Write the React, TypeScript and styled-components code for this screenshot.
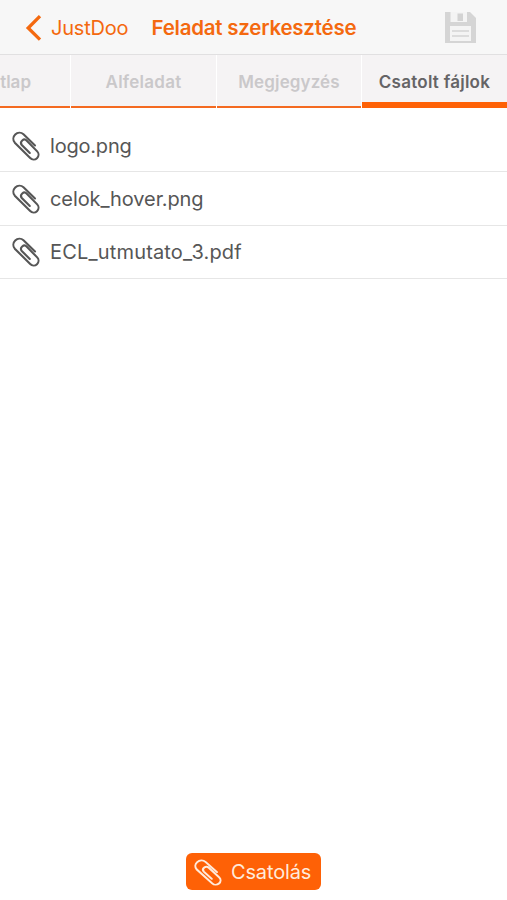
import React from "react";
import styled, { createGlobalStyle } from "styled-components";

const Global = createGlobalStyle`
  * { box-sizing: border-box; }
  body { margin: 0; background: #fff; font-family: Inter, "Liberation Sans", sans-serif; }
`;

const Screen = styled.div`
  display: flex;
  flex-direction: column;
  width: 507px;
  height: 900px;
  overflow: hidden;
  background: #fff;
`;

const NavBar = styled.header`
  display: flex;
  align-items: center;
  height: 55px;
  flex: none;
  padding: 1px 31px 0 25px;
  background: #f7f7f7;
  color: #f4690f;
  border-bottom: 1px solid #e1e0e1;
`;

const BackButton = styled.a`
  display: flex;
  align-items: center;
  gap: 9px;
  width: 126.5px;
  flex: none;
  font-size: 20px;
  letter-spacing: -0.2px;
  white-space: nowrap;
`;

const Title = styled.h1`
  margin: 0;
  flex: 1;
  font-size: 20.5px;
  font-weight: 600;
  letter-spacing: -0.23px;
  white-space: nowrap;
`;

const TabBar = styled.nav`
  display: grid;
  grid-template-columns: 70px 145px 144px 145px;
  column-gap: 1px;
  width: 507px;
  height: 53px;
  flex: none;
  background: #fff;
`;

const Tab = styled.div<{ $active?: boolean; $clipped?: boolean; $spacing?: number }>`
  display: flex;
  justify-content: ${(p) => (p.$clipped ? "flex-end" : "center")};
  padding: 17px ${(p) => (p.$clipped ? 39 : 0)}px 0 0;
  overflow: hidden;
  background: #f5f3f4;
  box-shadow: inset 0 ${(p) => (p.$active ? -6 : -2)}px 0 ${(p) => (p.$active ? "#fe6106" : "#f46a20")};
  color: ${(p) => (p.$active ? "#656466" : "#cac8ca")};
  font-size: 17px;
  font-weight: 600;
  line-height: 20px;
  letter-spacing: ${(p) => p.$spacing ?? 0}px;
  white-space: nowrap;
`;

const FileList = styled.ul`
  flex: 1;
  margin: 0;
  padding: 11px 0 0;
  list-style: none;
`;

const FileRow = styled.li`
  display: flex;
  align-items: center;
  gap: 10.5px;
  height: 53.3px;
  padding: 1px 0 0 11.5px;
  border-bottom: 1px solid #e6e6e6;
  color: #565656;
`;

const FileName = styled.span<{ $spacing: number }>`
  font-size: 20px;
  line-height: 24px;
  letter-spacing: ${(p) => p.$spacing}px;
  white-space: nowrap;
`;

const Footer = styled.footer`
  display: flex;
  justify-content: center;
  flex: none;
  height: 47px;
`;

const AttachButton = styled.button`
  display: flex;
  align-items: center;
  gap: 9px;
  width: 135px;
  height: 37px;
  padding: 1px 0 0 8px;
  border: 0;
  border-radius: 6px;
  background: #fe6106;
  color: #ffeadb;
  font: 400 20px/24px Inter, sans-serif;
  letter-spacing: -0.15px;
`;

const BackIcon = () => (
  <svg width="17" height="28" viewBox="0 0 17 28" fill="none" stroke="#f4690f" strokeWidth="3.3">
    <path d="M15 2.2 3.2 14 15 25.6" />
  </svg>
);

const ClipIcon = ({ width = 28, height = 30 }: { width?: number; height?: number }) => (
  <svg width={width} height={height} viewBox="0 0 28 30" preserveAspectRatio="none" fill="none" stroke="currentColor" strokeWidth="2.1" strokeLinecap="round">
    <path d="M23 14.5 11.5 3.2A6.1 6.1 0 0 0 2.8 11.7L18.2 27A4.7 4.7 0 0 0 25.2 20.4L14.8 9.7A3.3 3.3 0 0 0 9.8 14L17.8 22" />
  </svg>
);

const SaveIcon = () => (
  <svg width="31" height="31" viewBox="0 0 31 31">
    <path d="M0 0H25L31 6V31H0Z" fill="#d5d5d5" />
    <path d="M5.5 0H22V10H5.5ZM5 14H26V29H5Z" fill="#f4f4f4" />
    <path d="M12.5 1.5H18V9H12.5Z" fill="#d3d3d3" />
    <path d="M7 19H24M7 24H24" stroke="#d3d3d3" strokeWidth="1.6" />
  </svg>
);

const files = [
  { name: "logo.png", spacing: -0.2 },
  { name: "celok_hover.png", spacing: -0.1 },
  { name: "ECL_utmutato_3.pdf", spacing: 0.17 },
];

export default function App() {
  return (
    <>
      <Global />
      <Screen>
        <NavBar>
          <BackButton><BackIcon />JustDoo</BackButton>
          <Title>Feladat szerkesztése</Title>
          <SaveIcon />
        </NavBar>
        <TabBar>
          <Tab $clipped>Adatlap</Tab>
          <Tab $spacing={0.25}>Alfeladat</Tab>
          <Tab $spacing={0.1}>Megjegyzés</Tab>
          <Tab $active $spacing={0.25}>Csatolt fájlok</Tab>
        </TabBar>
        <FileList>
          {files.map((f) => (
            <FileRow key={f.name}>
              <ClipIcon />
              <FileName $spacing={f.spacing}>{f.name}</FileName>
            </FileRow>
          ))}
        </FileList>
        <Footer>
          <AttachButton><ClipIcon height={27} />Csatolás</AttachButton>
        </Footer>
      </Screen>
    </>
  );
}
